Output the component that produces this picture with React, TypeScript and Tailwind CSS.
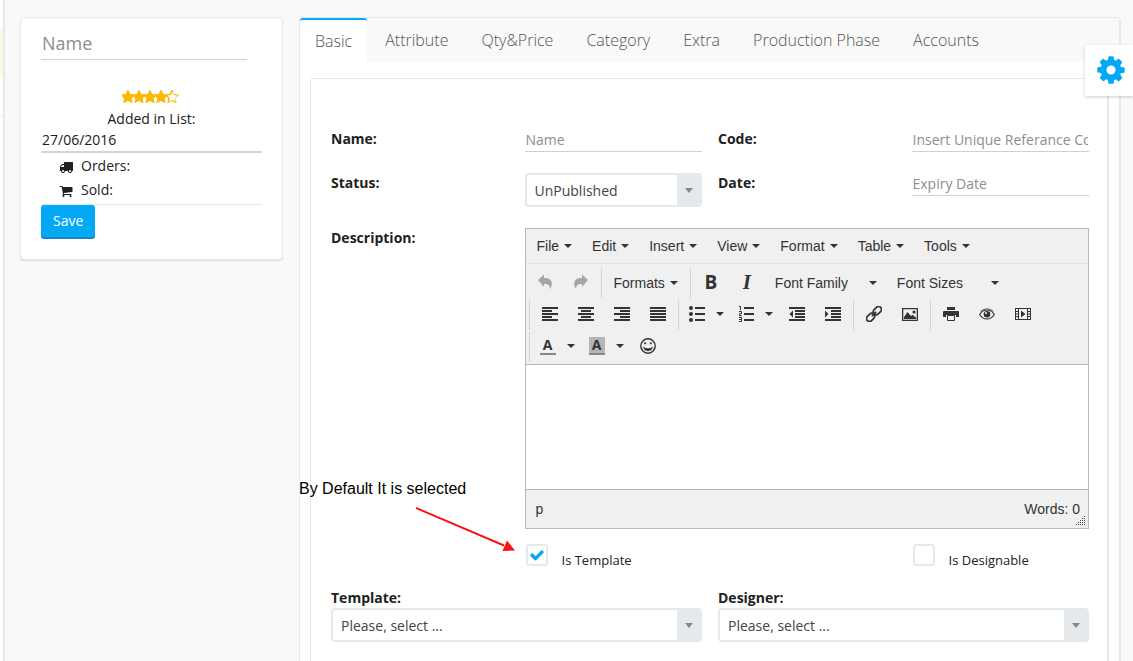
import type { ReactNode } from "react";

const FA = {
  star: "M1664 647q0 22-26 48l-363 354 86 500q1 7 1 20 0 21-10.5 35.5t-30.5 14.5q-19 0-40-12l-449-236-449 236q-22 12-40 12-21 0-31.5-14.5t-10.5-35.5q0-6 2-20l86-500-364-354q-25-27-25-48 0-37 56-46l502-73 225-455q19-41 49-41t49 41l225 455 502 73q56 9 56 46z",
  starEmpty:
    "M1201 1004l306-297-422-62-189-382-189 382-422 62 306 297-73 421 378-199 377 199zm463-357q0 22-26 48l-363 354 86 500q1 7 1 20 0 50-41 50-19 0-40-12l-449-236-449 236q-22 12-40 12-21 0-31.5-14.5t-10.5-35.5q0-6 2-20l86-500-364-354q-25-27-25-48 0-37 56-46l502-73 225-455q19-41 49-41t49 41l225 455 502 73q56 9 56 46z",
  truck:
    "M640 1408q0-52-38-90t-90-38-90 38-38 90 38 90 90 38 90-38 38-90zm-384-512h384v-256h-158q-13 0-22 9l-195 195q-9 9-9 22v30zm1280 512q0-52-38-90t-90-38-90 38-38 90 38 90 90 38 90-38 38-90zm256-1088v1024q0 15-4 26.5t-13.5 18.5-16.5 11.5-23.5 6-22.5 2-25.5 0-22.5-.5q0 106-75 181t-181 75-181-75-75-181h-384q0 106-75 181t-181 75-181-75-75-181h-64q-3 0-22.5.5t-25.5 0-22.5-2-23.5-6-16.5-11.5-13.5-18.5-4-26.5q0-26 19-45t45-19v-320q0-8-.5-35t0-38 2.5-34.5 6.5-37 14-30.5 22.5-30l198-198q19-19 50.5-32t58.5-13h160v-192q0-26 19-45t45-19h1024q26 0 45 19t19 45z",
  cart: "M704 1536q0 52-38 90t-90 38-90-38-38-90 38-90 90-38 90 38 38 90zm896 0q0 52-38 90t-90 38-90-38-38-90 38-90 90-38 90 38 38 90zm128-1088v512q0 24-16.5 42.5t-40.5 21.5l-1044 122q13 60 13 70 0 16-24 64h920q26 0 45 19t19 45-19 45-45 19h-1024q-26 0-45-19t-19-45q0-11 8-31.5t16-36 21.5-40 15.5-29.5l-177-823h-204q-26 0-45-19t-19-45 19-45 45-19h256q16 0 28.5 6.5t19.5 15.5 13 24.5 8 26 5.5 29.5 4.5 26h1201q26 0 45 19t19 45z",
  cog: "M1152 896q0-106-75-181t-181-75-181 75-75 181 75 181 181 75 181-75 75-181zm512-109v222q0 12-8 23t-20 13l-185 28q-19 54-39 91 35 50 107 138 10 12 10 25t-9 23q-27 37-99 108t-94 71q-12 0-26-9l-138-108q-44 23-91 38-16 136-29 186-7 28-36 28h-222q-14 0-24.5-8.5t-11.5-21.5l-28-184q-49-16-90-37l-141 107q-10 9-25 9-14 0-25-11-126-114-165-168-7-10-7-23 0-12 8-23 15-21 51-66.5t54-70.5q-27-50-41-99l-183-27q-13-2-21-12.5t-8-23.5v-222q0-12 8-23t19-13l186-28q14-46 39-92-40-57-107-138-10-12-10-24 0-10 9-23 26-36 98.5-107.5t94.5-71.5q13 0 26 10l138 107q44-23 91-38 16-136 29-186 7-28 36-28h222q14 0 24.5 8.5t11.5 21.5l28 184q49 16 90 37l142-107q9-9 24-9 13 0 25 10 129 119 165 170 7 8 7 22 0 12-8 23-15 21-51 66.5t-54 70.5q26 50 41 98l183 28q13 2 21 12.5t8 23.5z",
  check:
    "M1671 566q0 40-28 68l-724 724-136 136q-28 28-68 28t-68-28l-136-136-362-362q-28-28-28-68t28-68l136-136q28-28 68-28t68 28l294 295 656-657q28-28 68-28t68 28l136 136q28 28 28 68z",
};

function FaIcon({ path, className, viewBox = "0 0 1792 1792" }: { path: string; className: string; viewBox?: string }) {
  return (
    <svg viewBox={viewBox} fill="currentColor" aria-hidden="true" className={className}>
      <path d={path} />
    </svg>
  );
}

function Caret() {
  return (
    <svg viewBox="0 0 8 4" width="8" height="4" fill="currentColor" aria-hidden="true" className="shrink-0">
      <path d="M0 0h8L4 4z" />
    </svg>
  );
}

function Glyph({ children }: { children: ReactNode }) {
  return (
    <svg viewBox="0 0 16 16" width="16" height="16" fill="currentColor" aria-hidden="true" className="shrink-0">
      {children}
    </svg>
  );
}

/* Paragraph icons: five 2px bars, each given as [left, width]. */
function Bars({ rows, children }: { rows: [number, number][]; children?: ReactNode }) {
  return (
    <Glyph>
      <g shapeRendering="crispEdges">
        {rows.map(([x, w], i) => (
          <rect key={i} x={x} y={1 + i * 3} width={w} height="2" />
        ))}
      </g>
      {children}
    </Glyph>
  );
}

function ToolButton({ label, disabled, children }: { label: string; disabled?: boolean; children: ReactNode }) {
  return (
    <button
      type="button"
      aria-label={label}
      disabled={disabled}
      className="flex h-[30px] w-9 items-center justify-center pb-0.5 disabled:text-[#a6a6a6]"
    >
      {children}
    </button>
  );
}

function SplitButton({ label, children }: { label: string; children: ReactNode }) {
  return (
    <button
      type="button"
      aria-label={label}
      className="flex h-[30px] w-[49px] items-center justify-between pr-1.5 pb-0.5 pl-2"
    >
      {children}
      <Caret />
    </button>
  );
}

function ListButton({ label }: { label: string }) {
  return (
    <button type="button" className="flex h-[30px] w-[122px] items-center justify-between px-2.5">
      {label}
      <Caret />
    </button>
  );
}

function Group({ first, children }: { first?: boolean; children: ReactNode }) {
  return (
    <div className={first ? "flex h-[30px] pr-px" : "flex h-[30px] border-l border-[#d4d4d4] px-0.5"}>{children}</div>
  );
}

function Editor() {
  const menus = ["File", "Edit", "Insert", "View", "Format", "Table", "Tools"];
  return (
    <div className="border border-[#b9b9b9] bg-[#f0f0f0] font-['Liberation_Sans',Arial,sans-serif] text-sm leading-5 text-[#333]">
      <div className="flex h-[35px] items-center border-b border-[#e3e3e3] pl-px">
        {menus.map((m) => (
          <button key={m} type="button" className="flex items-center gap-[5px] px-2.5">
            {m}
            <Caret />
          </button>
        ))}
      </div>
      <div className="flex flex-col gap-0.5 border-b border-[#b9b9b9] pt-1 pb-0.5 pl-0.5">
        <div className="flex">
          <Group first>
            <ToolButton label="Undo" disabled>
              <Glyph>
                <path d="M0 6 6 .5v3.600c5.200 0 7.800 2 7.800 5.500 0 2.300-.8 4.200-2 5.600.3-3.600-1.200-5.200-5.800-5.200v3z" />
              </Glyph>
            </ToolButton>
            <ToolButton label="Redo" disabled>
              <Glyph>
                <path d="M14 6 8 .5v3.600C2.800 4.100.2 6.100.2 9.600c0 2.300.8 4.200 2 5.600C1.900 11.600 3.400 10 8 10v3z" />
              </Glyph>
            </ToolButton>
          </Group>
          <Group>
            <button type="button" className="flex items-center gap-[5px] px-2.5">
              Formats
              <Caret />
            </button>
          </Group>
          <Group>
            <ToolButton label="Bold">
              <span className="font-['Open_Sans',sans-serif] text-[19px] font-bold">B</span>
            </ToolButton>
            <ToolButton label="Italic">
              <span className="font-['Liberation_Serif',serif] text-[21px] font-bold italic">I</span>
            </ToolButton>
            <ListButton label="Font Family" />
            <ListButton label="Font Sizes" />
          </Group>
        </div>
        <div className="flex pl-px">
          <Group>
            <ToolButton label="Align left">
              <Bars rows={[[0, 16], [0, 10], [0, 16], [0, 10], [0, 16]]} />
            </ToolButton>
            <ToolButton label="Align center">
              <Bars rows={[[0, 16], [3, 10], [0, 16], [3, 10], [0, 16]]} />
            </ToolButton>
            <ToolButton label="Align right">
              <Bars rows={[[0, 16], [6, 10], [0, 16], [6, 10], [0, 16]]} />
            </ToolButton>
            <ToolButton label="Justify">
              <Bars rows={[[0, 16], [0, 16], [0, 16], [0, 16], [0, 16]]} />
            </ToolButton>
          </Group>
          <Group>
            <SplitButton label="Bullet list">
              <Glyph>
                <circle cx="2" cy="2" r="2" />
                <circle cx="2" cy="8" r="2" />
                <circle cx="2" cy="14" r="2" />
                <path d="M6 1h10v2H6zM6 7h10v2H6zM6 13h10v2H6z" />
              </Glyph>
            </SplitButton>
            <SplitButton label="Numbered list">
              <Glyph>
                <path d="M6 1h10v2H6zM6 7h10v2H6zM6 13h10v2H6z" />
                <path
                  d="M1 .5h1.500V4M1 5.500h2.500v2.200h-2v2H4M1 11.500h2.500v4H1M1 13.500h2.500"
                  fill="none"
                  stroke="currentColor"
                />
              </Glyph>
            </SplitButton>
            <ToolButton label="Decrease indent">
              <Bars rows={[[0, 16], [6, 10], [6, 10], [6, 10], [0, 16]]}>
                <path d="M4 4.500v7L.5 8z" />
              </Bars>
            </ToolButton>
            <ToolButton label="Increase indent">
              <Bars rows={[[0, 16], [6, 10], [6, 10], [6, 10], [0, 16]]}>
                <path d="M0 4.500v7L3.500 8z" />
              </Bars>
            </ToolButton>
          </Group>
          <Group>
            <ToolButton label="Insert link">
              <Glyph>
                <g transform="rotate(-45 8 8)" fill="none" stroke="currentColor" strokeWidth="1.700">
                  <rect x="-1.300" y="5.100" width="9" height="5.800" rx="2.900" />
                  <rect x="8.300" y="5.100" width="9" height="5.800" rx="2.900" />
                  <path d="M5 8h6" />
                </g>
              </Glyph>
            </ToolButton>
            <ToolButton label="Insert image">
              <Glyph>
                <path fillRule="evenodd" d="M0 2h16v13H0zM1.300 3.300v10.400h13.400V3.300z" />
                <path d="M2 13V11l3.500-5L9 10l1.500-1.300L14 11.500V13z" />
                <circle cx="12" cy="6" r="1.600" />
              </Glyph>
            </ToolButton>
          </Group>
          <Group>
            <ToolButton label="Print">
              <Glyph>
                <path d="M4 1h8v3H4zM1 5h14a1 1 0 0 1 1 1v5h-3V9H3v2H0V6a1 1 0 0 1 1-1z" />
                <path d="M4.500 9.500h7v5h-7z" fill="#f0f0f0" stroke="currentColor" />
              </Glyph>
            </ToolButton>
            <ToolButton label="Preview">
              <Glyph>
                <path
                  d="M.6 8.500C2.500 5.300 5 4 8 4s5.500 1.300 7.400 4.500C13.500 11.600 11 13 8 13S2.500 11.600.6 8.500z"
                  fill="none"
                  stroke="currentColor"
                  strokeWidth="1.100"
                />
                <path d="M1.500 5.600C3.500 3.700 5.500 3 8 3s4.500.7 6.500 2.600" fill="none" stroke="currentColor" strokeWidth=".8" />
                <circle cx="8" cy="8.200" r="3.300" />
                <circle cx="7" cy="7" r="1.100" fill="#f0f0f0" />
              </Glyph>
            </ToolButton>
            <ToolButton label="Insert video">
              <Glyph>
                <path
                  fillRule="evenodd"
                  d="M0 2h16v12H0zM4 3v10h8V3zM1 3v2h2V3zM1 6v1.500h2V6zM1 8.500V10h2V8.500zM1 11v2h2v-2zM13 3v2h2V3zM13 6v1.500h2V6zM13 8.500V10h2V8.500zM13 11v2h2v-2z"
                />
                <path d="M6 4.500v7L10.500 8z" />
              </Glyph>
            </ToolButton>
          </Group>
        </div>
        <div className="flex pl-px">
          <Group>
            <SplitButton label="Text color">
              <span className="h-[18px] w-4 border-b-2 border-[#888] text-center font-['Open_Sans',sans-serif] text-sm leading-4 font-bold">
                A
              </span>
            </SplitButton>
            <SplitButton label="Background color">
              <span className="h-[18px] w-4 border-b-2 border-[#888] bg-[#b5b5b5] text-center font-['Open_Sans',sans-serif] text-sm leading-4 font-bold">
                A
              </span>
            </SplitButton>
            <ToolButton label="Emoticons">
              <Glyph>
                <circle cx="8" cy="8" r="7.200" fill="none" stroke="currentColor" strokeWidth="1.400" />
                <circle cx="5.200" cy="5.300" r="1.100" />
                <circle cx="10.800" cy="5.300" r="1.100" />
                <path d="M3 8.500c1.500 1.300 3 1.800 5 1.800s3.500-.5 5-1.800c-.6 3-2.600 4.500-5 4.500s-4.400-1.500-5-4.500z" />
              </Glyph>
            </ToolButton>
          </Group>
        </div>
      </div>
      <textarea aria-label="Description" className="block h-[124px] w-full resize-none bg-white p-2 outline-none" />
      <div className="relative flex h-[39px] items-center justify-between border-t border-[#b9b9b9] pr-2 pl-2.5">
        <span>p</span>
        <span>Words: 0</span>
        <svg viewBox="0 0 10 10" width="10" height="10" fill="#444" aria-hidden="true" className="absolute right-0.5 bottom-0.5">
          {[0, 1, 2, 3, 4].flatMap((r) =>
            Array.from({ length: r + 1 }, (_, c) => (
              <rect key={`${r}-${c}`} x={8 - c * 2} y={r * 2} width="1" height="1" />
            )),
          )}
        </svg>
      </div>
    </div>
  );
}

function SelectBox({ id, options }: { id: string; options: string[] }) {
  return (
    <div className="relative h-[34px] w-full overflow-hidden rounded border-2 border-[#e6e9ec] bg-white">
      <select id={id} className="h-full w-full appearance-none bg-transparent pt-0.5 pr-7 pl-2 text-sm text-[#444] outline-none">
        {options.map((o) => (
          <option key={o}>{o}</option>
        ))}
      </select>
      <span className="pointer-events-none absolute inset-y-0 right-0 flex w-[23px] items-center justify-center bg-[#e6e9ec] text-[#888]">
        <svg viewBox="0 0 8 5" width="8" height="5" fill="currentColor" aria-hidden="true">
          <path d="M0 0h8L4 5z" />
        </svg>
      </span>
    </div>
  );
}

function TextField({ id, placeholder }: { id: string; placeholder: string }) {
  return (
    <input
      id={id}
      placeholder={placeholder}
      className="h-6 w-full min-w-0 border-b border-[#d0d0d0] px-px text-sm outline-none placeholder:text-[#8e8e8e]"
    />
  );
}

function CheckField({ id, label, checked }: { id: string; label: string; checked?: boolean }) {
  return (
    <div className="flex gap-3.5 pl-px">
      <span className="relative flex size-[22px] items-center justify-center">
        <input
          id={id}
          type="checkbox"
          defaultChecked={checked}
          className="peer size-[22px] appearance-none rounded-[3px] border-2 border-[#e6e9ec] bg-white"
        />
        <FaIcon
          path={FA.check}
          viewBox="100 200 1592 1392"
          className="pointer-events-none absolute hidden w-[14px] text-[#03a9f4] peer-checked:block"
        />
      </span>
      <label htmlFor={id} className="pt-1.5 text-[13px] leading-5">
        {label}
      </label>
    </div>
  );
}

const labelClass = "text-sm leading-[22px] font-bold";
const tightLabelClass = "block text-sm leading-5 font-bold";

export default function App() {
  const tabs = ["Attribute", "Qty&Price", "Category", "Extra", "Production Phase", "Accounts"];
  return (
    <div className="relative flex min-h-screen bg-[#f9f9f9] font-['Open_Sans',sans-serif] text-sm text-[#212121]">
      <div className="w-[5px] shrink-0 border-r-2 border-[#e6e9ec] bg-white pt-7">
        <div className="h-[47px] bg-[#fff8e1]" />
        <div className="h-[41px] border-b border-[#e6e9ec]" />
      </div>

      <aside className="mt-[17px] ml-[15px] w-[263px] shrink-0 self-start rounded border border-[#e7e9ec] bg-white px-5 pt-2.5 pb-5 shadow-[0_1px_1px_rgba(0,0,0,0.12)]">
        <input
          aria-label="Product name"
          placeholder="Name"
          className="block h-8 w-[206px] border-b border-[#d0d0d0] px-px pb-0.5 text-lg outline-none placeholder:text-[#8e8e8e]"
        />
        <div className="mt-[30px] flex justify-center pr-0.5 text-[#fbb903]" role="img" aria-label="4 of 5 stars">
          {[0, 1, 2, 3, 4].map((i) => (
            <FaIcon
              key={i}
              path={i < 4 ? FA.star : FA.starEmpty}
              viewBox="128 64 1536 1654"
              className="-mx-px h-[14px] w-[13px] shrink-0"
            />
          ))}
        </div>
        <label htmlFor="added" className="mt-1 block text-center leading-[22px]">
          Added in List:
        </label>
        <input
          id="added"
          defaultValue="27/06/2016"
          className="block h-[23px] w-full border-b-2 border-[#d5d5d5] px-px pb-0.5 text-sm outline-none"
        />
        <ul className="border-b border-[#e7e7e7] pt-px pb-0.5 pl-[18px] leading-6">
          <li className="flex items-center gap-2">
            <FaIcon path={FA.truck} className="mt-0.5 size-[14px]" />
            Orders:
          </li>
          <li className="flex items-center gap-2">
            <FaIcon path={FA.cart} className="mt-0.5 size-[14px]" />
            Sold:
          </li>
        </ul>
        <button type="button" className="h-[34px] rounded-[3px] border-b-2 border-[#1b86c6] bg-[#03a9f4] px-3 text-white">
          Save
        </button>
      </aside>

      <main className="relative mt-[17px] mr-3 ml-4 flex min-w-0 flex-1 flex-col rounded-t border border-r-2 border-b-0 border-[#e7e9ec] bg-white">
        <nav className="flex h-11 items-start gap-[3px] bg-[#f9f9f9] text-base font-light text-[#555]">
          <a href="#basic" className="h-11 rounded-t-[3px] border-t-2 border-[#03a9f4] bg-white px-[15px] leading-[42px]">
            Basic
          </a>
          {tabs.map((t) => (
            <a key={t} href="#tab" className="px-[15px] leading-[44px]">
              {t}
            </a>
          ))}
        </nav>

        <form className="mx-2.5 mt-4 flex-1 rounded-t border border-r-2 border-b-0 border-[#e7e9ec] pt-[49px] pr-[18px] pl-5">
          <div className="grid grid-cols-4 items-start gap-x-4">
            <label htmlFor="name" className={labelClass}>Name:</label>
            <TextField id="name" placeholder="Name" />
            <label htmlFor="code" className={labelClass}>Code:</label>
            <TextField id="code" placeholder="Insert Unique Referance Code" />
          </div>
          <div className="mt-5 grid grid-cols-4 items-start gap-x-4">
            <label htmlFor="status" className={labelClass}>Status:</label>
            <div className="pt-px">
              <SelectBox id="status" options={["UnPublished", "Published"]} />
            </div>
            <label htmlFor="date" className={labelClass}>Date:</label>
            <TextField id="date" placeholder="Expiry Date" />
          </div>
          <div className="mt-[21px] grid grid-cols-4 items-start gap-x-4">
            <span className={tightLabelClass}>Description:</span>
            <div className="col-span-3">
              <Editor />
            </div>
          </div>
          <div className="mt-[15px] grid grid-cols-4 gap-x-4">
            <div className="col-start-2">
              <CheckField id="is-template" label="Is Template" checked />
            </div>
            <div className="col-start-4">
              <CheckField id="is-designable" label="Is Designable" />
            </div>
          </div>
          <div className="mt-[18px] grid grid-cols-2 gap-x-4">
            <div>
              <label htmlFor="template" className={tightLabelClass}>Template:</label>
              <SelectBox id="template" options={["Please, select ..."]} />
            </div>
            <div>
              <label htmlFor="designer" className={tightLabelClass}>Designer:</label>
              <SelectBox id="designer" options={["Please, select ..."]} />
            </div>
          </div>
        </form>

        <div className="pointer-events-none absolute top-[461px] -left-px font-['Liberation_Sans',Arial,sans-serif] text-base leading-5 whitespace-nowrap text-black">
          By Default It is selected
          <svg viewBox="0 0 100 46" width="100" height="46" aria-hidden="true" className="mt-2 ml-[117px]">
            <path d="M0 1 88 38.500" stroke="#f81414" strokeWidth="2" />
            <path d="M91 33.500 99 43.500 86.500 44z" fill="#f81414" />
          </svg>
        </div>
      </main>

      <button
        type="button"
        aria-label="Settings"
        className="absolute top-[45px] right-0 flex h-[51px] w-12 items-center justify-center bg-white pb-0.5 pl-1 text-[#03a9f4] shadow-[0_1px_3px_rgba(0,0,0,0.2)]"
      >
        <FaIcon path={FA.cog} className="size-8" />
      </button>
    </div>
  );
}
